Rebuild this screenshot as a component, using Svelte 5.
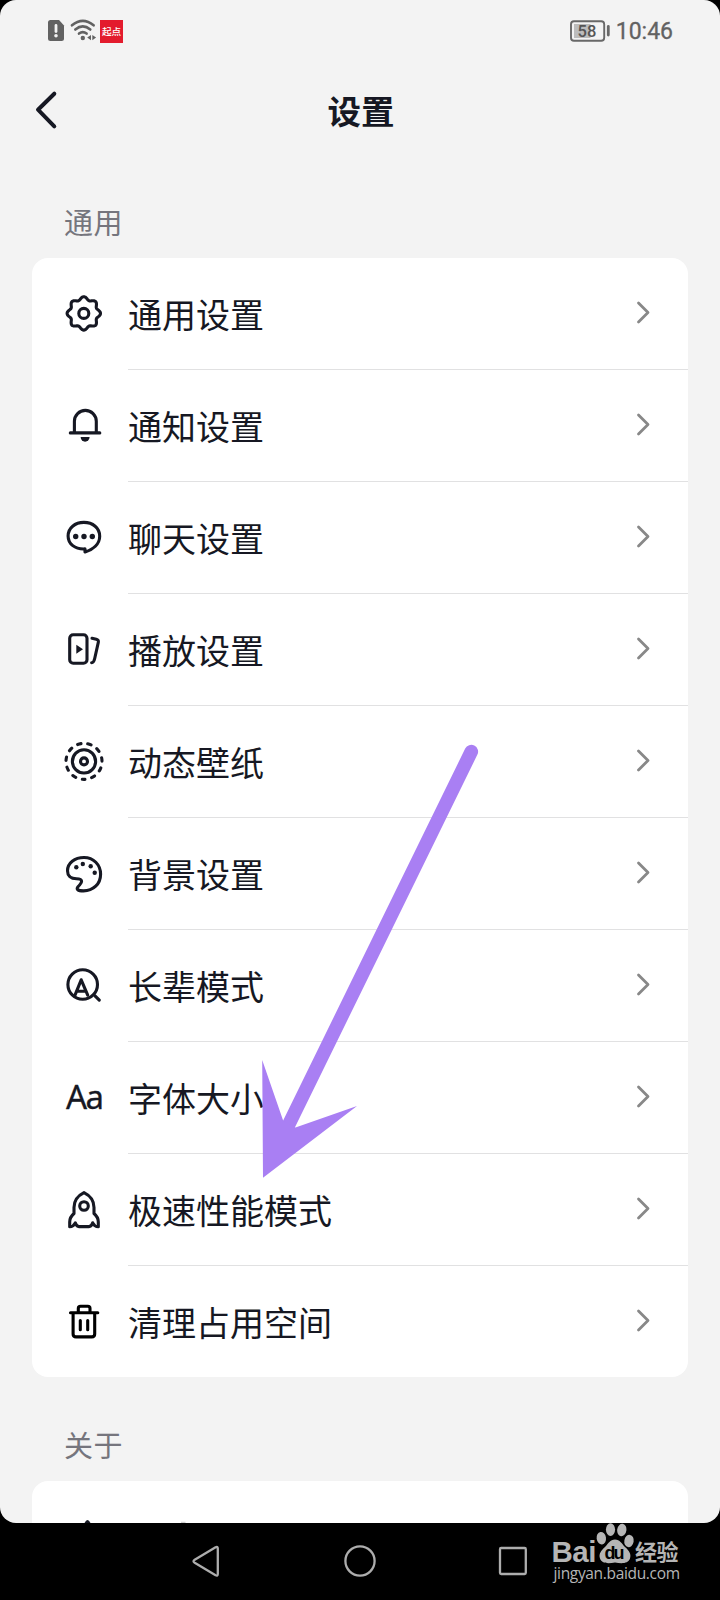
<script>
  const items = [
    ['gear', '通用设置'],
    ['bell', '通知设置'],
    ['chat', '聊天设置'],
    ['play', '播放设置'],
    ['wallpaper', '动态壁纸'],
    ['palette', '背景设置'],
    ['elder', '长辈模式'],
    ['font', '字体大小'],
    ['rocket', '极速性能模式'],
    ['trash', '清理占用空间']
  ];

  // Eight-lobed outline of the settings gear
  const gearPath =
    'M' +
    Array.from({ length: 144 }, (_, i) => {
      const a = (i / 144) * Math.PI * 2;
      const r = 15.2 + 1.5 * Math.cos(8 * a);
      return (19.8 + r * Math.cos(a)).toFixed(2) + ' ' + (19.4 + r * Math.sin(a)).toFixed(2);
    }).join('L') +
    'Z';
</script>

<div class="phone">
  <div class="screen">
    <header class="status">
      <svg class="signals" width="80" height="28" viewBox="46 17 80 28">
        <path d="M50.5 20H59l5 5.5V38.500a2.500 2.500 0 0 1-2.500 2.500H50.500a2.500 2.500 0 0 1-2.500-2.500V22.500A2.500 2.500 0 0 1 50.500 20z" fill="#626262" />
        <path d="M56 25.500V31.500" stroke="#f3f3f3" stroke-width="2.800" stroke-linecap="round" />
        <circle cx="56" cy="35.700" r="1.800" fill="#f3f3f3" />
        <g fill="none" stroke="#626262" stroke-width="2.600" stroke-linecap="round">
          <path d="M72 25.300Q82.800 16.300 93.600 25.300" />
          <path d="M75.300 29.500Q82.800 23.300 90.300 29.500" />
          <path d="M79 33.600Q82.800 30.600 86.600 33.600" />
        </g>
        <circle cx="82.800" cy="38" r="2.200" fill="#626262" />
        <path d="M91 35v5.200l-3.800-2.600zM92.300 35v5.200l3.800-2.600z" fill="#626262" />
        <rect x="100" y="20" width="23" height="23" fill="#e31b2d" />
        <text x="102" y="34.800" font-size="9.600" font-weight="500" fill="#fff" textLength="19">起点</text>
      </svg>
      <div class="power">
        <svg width="42" height="24" viewBox="569 19 42 24">
          <rect x="571" y="21.300" width="33.200" height="19.400" rx="3" fill="none" stroke="#686868" stroke-width="1.900" />
          <rect x="574" y="24" width="16.500" height="14" fill="#bcbcbc" />
          <path d="M608.300 26.500v8.500" stroke="#686868" stroke-width="2.800" stroke-linecap="round" />
          <text class="pct" x="577.600" y="36.500">58</text>
        </svg>
        <span class="time">10:46</span>
      </div>
    </header>

    <div class="titlebar">
      <svg class="back" width="24" height="40" viewBox="34 90 24 40">
        <path d="M54.300 93.700L38 109.700L54.300 126.300" />
      </svg>
      <h1>设置</h1>
    </div>

    <h2>通用</h2>
    <section class="card">
      {#each items as [icon, label]}
        <div class="row">
          <svg class="icon" class:black={icon === 'trash'} width="40" height="40" viewBox="0 0 40 40">
            {#if icon === 'gear'}
              <path d={gearPath} />
              <circle cx="19.800" cy="19.400" r="5" />
            {:else if icon === 'bell'}
              <path d="M10.400 26.800V15.300a10.950 10.950 0 0 1 21.900 0V26.800M6.300 26.900H35.800" />
              <path class="solid" d="M16.600 31h9a4.500 4.700 0 0 1-9 0z" />
            {:else if icon === 'chat'}
              <path d="M20.800 30.900C11 31.400 4.100 26 4.100 18C4.100 10 11 4.400 19.900 4.400S35.700 10 35.700 18.200C35.700 26 29 31.500 21 34V30.900z" />
              <g class="solid"><circle cx="11.700" cy="18.500" r="2.700" /><circle cx="20" cy="18.500" r="2.700" /><circle cx="28.300" cy="18.500" r="2.700" /></g>
            {:else if icon === 'play'}
              <rect x="5.700" y="4.700" width="17.300" height="28.600" rx="3.500" />
              <path class="solid" d="M12.300 14.800v9l6.700-4.500z" />
              <path d="M28 8.300L32.300 9.200Q34.900 9.800 34.300 12.400L30.700 28.500Q29.800 32.700 27.600 32.800" />
            {:else if icon === 'wallpaper'}
              <circle cx="20" cy="19.400" r="18" stroke-dasharray="3.400 6.882" stroke-dashoffset="1.700" transform="rotate(90 20 19.400)" />
              <circle cx="20" cy="19.400" r="11.600" />
              <circle cx="20" cy="19.400" r="3.500" />
            {:else if icon === 'palette'}
              <path d="M20 3.500C29.400 3.500 36.600 10.600 36.600 20.200C36.600 30 29.200 36.900 19.500 36.900C13.500 36.900 12 35.200 14.200 32.600C16 30.400 17.800 29.400 17.600 27.200C17.400 24.900 15.400 24.800 12.500 24.800C6.600 24.800 3.500 21.600 3.500 16.800C3.500 9.200 10.600 3.500 20 3.500Z" />
              <g class="solid"><circle cx="12.300" cy="13.300" r="2.200" /><circle cx="18.800" cy="10" r="2.200" /><circle cx="26.700" cy="12.300" r="2.200" /><circle cx="30.700" cy="18.700" r="2.200" /></g>
            {:else if icon === 'elder'}
              <circle cx="18.700" cy="18.500" r="14.800" />
              <path d="M31 29.800L35.300 34.200M11 29.200L17.200 13.800L23.700 29.200M13 25.300H21.500" />
            {:else if icon === 'font'}
              <text class="aa" x="2" y="31.400" textLength="38">Aa</text>
            {:else if icon === 'rocket'}
              <path d="M20 2.600C13.500 5.800 10 11.500 10 17.500V23.500C7 26 5.700 28.500 5.700 32V36.700C8.500 36.700 10 35.500 11.300 32.800C12.200 35.500 13.200 36.600 15 36.600H25C26.800 36.600 27.800 35.500 28.700 32.800C30 35.500 31.500 36.700 34.300 36.700V32C34.300 28.500 33 26 30 23.500V17.500C30 11.500 26.500 5.800 20 2.600Z" />
              <circle cx="20" cy="16" r="4.300" />
            {:else if icon === 'trash'}
              <path d="M6.500 10.700H33.800M14.300 10V6.500Q14.300 4.300 16.500 4.300H23.800Q26 4.300 26 6.500V10M9.100 11V32Q9.100 34.900 12 34.900H27.800Q30.700 34.900 30.700 32V11M16.300 18.500V27.800M23.700 18.500V27.800" />
            {/if}
          </svg>
          <span class="label">{label}</span>
          <svg class="chevron" width="24" height="40" viewBox="0 0 24 40">
            <path d="M6.500 9L16 18.500L6.500 28" />
          </svg>
        </div>
      {/each}
    </section>

    <h2 class="about">关于</h2>
    <section class="card next">
      <svg width="160" height="46" viewBox="64 1481 160 46">
        <path d="M84.500 1523Q87.500 1517 90.500 1523z" fill="#161823" />
        <path d="M181 1522.300h4.500" stroke="#999" stroke-width="0.600" />
      </svg>
    </section>
  </div>

  <nav>
    <svg width="40" height="40" viewBox="186 1541 40 40"><path d="M194.700 1559.800L215.600 1547.200Q217.800 1546.300 217.800 1548.500V1574Q217.800 1576.300 215.600 1575.200L194.700 1562.800Q192.300 1561.300 194.700 1559.800Z" /></svg>
    <svg width="40" height="40" viewBox="340 1541 40 40"><circle cx="360" cy="1561" r="14.600" /></svg>
    <svg width="40" height="40" viewBox="493 1541 40 40"><rect x="500" y="1548" width="25.800" height="26" rx="1.200" /></svg>
  </nav>

  <svg class="arrow" width="230" height="450" viewBox="255 735 230 450">
    <path d="M471.300 751.600L289 1124" stroke="#a97ff3" stroke-width="13.600" stroke-linecap="round" />
    <path d="M262.200 1060L283.300 1121L295.500 1127.500L357 1106L263 1177.700Z" fill="#a97ff3" />
  </svg>

  <svg class="watermark" width="136" height="70" viewBox="550 1520 136 70">
    <text class="bai" x="551.500" y="1562.300" textLength="45">Bai</text>
    <g>
      <ellipse cx="601.300" cy="1538.200" rx="4.700" ry="6.300" transform="rotate(-8 601.300 1538.200)" />
      <ellipse cx="610.500" cy="1529.600" rx="4.600" ry="6.300" />
      <ellipse cx="621.800" cy="1530" rx="4.600" ry="6.200" transform="rotate(8 621.800 1530)" />
      <ellipse cx="629" cy="1541" rx="4.700" ry="6.200" transform="rotate(10 629 1541)" />
      <path d="M615 1539.500C620 1539.500 621.500 1543.500 625 1547C629 1550.500 631.500 1554 630 1558.500C628 1564 621.500 1563.500 615 1562.500C608.500 1563.500 602 1564 600 1558.500C598.500 1554 601 1550.500 605 1547C608.500 1543.500 610 1539.500 615 1539.500Z" />
    </g>
    <text class="du" x="604.500" y="1558.500" textLength="20">du</text>
    <text class="jy" x="635" y="1560.200" textLength="43.500">经验</text>
    <text class="url" x="553.500" y="1579.300" textLength="126.500">jingyan.baidu.com</text>
  </svg>
</div>

<style>
  :global(body) {
    margin: 0;
    background: #000;
  }
  .phone {
    position: relative;
    width: 720px;
    height: 1600px;
    overflow: hidden;
    display: flex;
    flex-direction: column;
    background: #000;
    font-family: 'Noto Sans CJK SC', sans-serif;
    color: #161823;
  }
  .screen {
    height: 1522.500px;
    flex: none;
    box-sizing: border-box;
    overflow: hidden;
    border-radius: 16px;
    background: #f3f3f3;
    display: flex;
    flex-direction: column;
  }
  svg {
    display: block;
    flex: none;
  }
  .status {
    flex: none;
    height: 62px;
    box-sizing: border-box;
    padding: 0 47px 0 46px;
    display: flex;
    align-items: center;
    justify-content: space-between;
  }
  .power {
    display: flex;
    align-items: center;
    gap: 5px;
  }
  .pct {
    font: 500 16.500px Roboto, sans-serif;
    fill: #555;
  }
  .time {
    margin-top: 2px;
    font: 400 23px/28px Roboto, sans-serif;
    color: #626262;
    -webkit-text-stroke: 0.300px #626262;
  }
  .titlebar {
    flex: none;
    height: 96px;
    display: grid;
    grid-template-columns: 24px 1fr 24px;
    align-items: center;
    padding: 0 34px;
  }
  .back path {
    fill: none;
    stroke: #161823;
    stroke-width: 4;
    stroke-linecap: round;
    stroke-linejoin: round;
  }
  h1 {
    margin: 0;
    padding-left: 2px;
    font-size: 33.500px;
    line-height: 40px;
    font-weight: 700;
    text-align: center;
  }
  h2 {
    flex: none;
    margin: 43px 0 0 64px;
    height: 57px;
    font-size: 29px;
    line-height: 40px;
    font-weight: 400;
    letter-spacing: 0.500px;
    color: #75757d;
  }
  h2.about {
    margin-top: 47px;
    height: 57px;
  }
  .card {
    flex: none;
    width: 656px;
    height: 1119px;
    margin: 0 32px;
    border-radius: 16px;
    background: #fff;
    overflow: hidden;
  }
  .card.next {
    height: 112px;
    box-sizing: border-box;
    padding-left: 32px;
  }
  .row {
    height: 112px;
    box-sizing: border-box;
    padding: 0 32px;
    display: flex;
    align-items: center;
    background: linear-gradient(#e1e1e2, #e1e1e2) 96px 111px / 560px 1px no-repeat;
  }
  .row:last-child {
    background: none;
  }
  .icon {
    fill: none;
    stroke: #161823;
    stroke-width: 3.100;
    stroke-linecap: round;
    stroke-linejoin: round;
    overflow: visible;
  }
  .icon.black {
    stroke: #000;
  }
  .icon .solid {
    fill: #161823;
    stroke: none;
  }
  .icon .aa {
    font: 400 33px 'Noto Sans', sans-serif;
    fill: #161823;
    stroke: #161823;
    stroke-width: 0.300;
  }
  .label {
    flex: 1;
    margin: 0 0 1px 24px;
    font-size: 34px;
    line-height: 50px;
    white-space: nowrap;
  }
  .chevron path {
    fill: none;
    stroke: #888;
    stroke-width: 2.800;
    stroke-linecap: round;
    stroke-linejoin: round;
  }
  nav {
    height: 77px;
    display: grid;
    grid-template-columns: 40px 40px 40px;
    column-gap: 113.500px;
    align-items: center;
    padding-left: 186px;
  }
  nav svg {
    fill: none;
    stroke: #adadad;
    stroke-width: 2.300;
    stroke-linejoin: round;
  }
  .arrow {
    position: absolute;
    left: 255px;
    top: 735px;
  }
  .watermark {
    position: absolute;
    left: 550px;
    top: 1520px;
    fill: #b5b5b5;
  }
  .bai {
    font: 700 29.500px 'Liberation Sans', sans-serif;
  }
  .du {
    font: 700 18px 'Liberation Sans', sans-serif;
    fill: #000;
  }
  .jy {
    font: 700 22px 'Noto Sans CJK SC', sans-serif;
  }
  .url {
    font: 400 15.500px 'Open Sans', sans-serif;
  }
</style>
